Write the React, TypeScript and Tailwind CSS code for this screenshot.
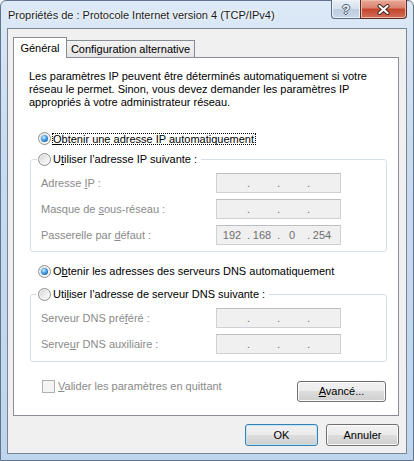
import React from 'react';

function Radio({ checked }: { checked?: boolean }) {
  return (
    <span className="flex h-[13px] w-[13px] shrink-0 items-center justify-center rounded-full border border-[#8e8f8f] bg-[linear-gradient(135deg,#cfd0d1_0%,#eeeeee_55%,#ffffff_100%)] shadow-[inset_0_0_0_1px_#f4f4f4]">
      {checked && (
        <span className="h-[7px] w-[7px] rounded-full bg-[radial-gradient(circle_at_40%_35%,#d6f1ff_0%,#4aa5ec_40%,#0c3d86_100%)]" />
      )}
    </span>
  );
}

function IpField({ values }: { values?: string[] }) {
  const v = values ?? ['', '', '', ''];
  return (
    <div className="flex h-[20px] w-[125px] items-center border border-[#cfd0d3] border-t-[#bdbec2] bg-[#f0f0f0] pl-[3px] text-[#6f6f6f]">
      {v.map((x, i) => (
        <React.Fragment key={i}>
          <span className="w-[24px] text-center">{x}</span>
          {i < 3 && <span className="w-[6px] text-right">.</span>}
        </React.Fragment>
      ))}
    </div>
  );
}

function FieldRow({ label, values }: { label: React.ReactNode; values?: string[] }) {
  return (
    <div className="flex h-[20px] items-center">
      <span className="w-[175px] text-[#8a8a8a]">{label}</span>
      <IpField values={values} />
    </div>
  );
}

function Button({ children, className, isDefault }: { children: React.ReactNode; className: string; isDefault?: boolean }) {
  return (
    <div
      className={`flex items-center justify-center rounded-[3px] border bg-[linear-gradient(#f2f2f2_0%,#ebebeb_50%,#dddddd_50%,#cfcfcf_100%)] text-black ${
        isDefault
          ? 'border-[#3c7fb1] shadow-[inset_0_0_0_1px_#bfe5f9]'
          : 'border-[#707070] shadow-[inset_0_0_0_1px_#fbfbfb]'
      } ${className}`}
    >
      {children}
    </div>
  );
}

function Group({ legend, children, className }: { legend: React.ReactNode; children: React.ReactNode; className: string }) {
  return (
    <fieldset className={`ml-[1px] mr-0 rounded-[3px] border border-[#d5dfe5] px-0 ${className}`}>
      <legend className="ml-[6px] pl-[1px] pr-[4px]">
        <span className="flex h-[13px] items-center">
          <Radio />
          <span className="ml-[2px] leading-[13px]">{legend}</span>
        </span>
      </legend>
      <div className="flex flex-col gap-[6px] pl-[10px]">{children}</div>
    </fieldset>
  );
}

export default function App() {
  return (
    <div className="h-[461px] w-[414px] font-['Liberation_Sans'] text-[11px] leading-[13px] text-black">
      <div className="flex h-full flex-col rounded-t-[6px] border border-[#62758c] bg-[linear-gradient(180deg,#dce9f7_0%,#c9dcf0_30%,#bed5ee_100%)] px-[6px] pb-[6px]">
        {/* title bar */}
        <div className="flex h-[27px] items-start">
          <span className="pl-[1px] pt-[8px] text-[#1b1b1b] [text-shadow:0_0_6px_#ffffff,0_0_3px_#ffffff]">
            Propriétés de : Protocole Internet version 4 (TCP/IPv4)
          </span>
          <div className="-mt-px ml-auto flex h-[19px]">
            <div className="flex w-[29px] items-center justify-center rounded-bl-[4px] border border-r-0 border-t-0 border-[#5b6b80] bg-[linear-gradient(#e9f0f8_0%,#d5e1ee_50%,#bccde0_50%,#c9d8e8_100%)] shadow-[inset_0_0_0_1px_#eef3f9]">
              <span className="font-bold text-[13px] leading-[13px] text-[#f4f6f8] [text-shadow:1px_0_#4b5a6c,-1px_0_#4b5a6c,0_1px_#4b5a6c,0_-1px_#4b5a6c]">?</span>
            </div>
            <div className="flex w-[47px] items-center justify-center rounded-br-[4px] border border-t-0 border-[#5a2a24] bg-[linear-gradient(#eaa998_0%,#d8816c_45%,#c4432b_50%,#d2705a_100%)] shadow-[inset_0_0_0_1px_#f0b8a8]">
              <svg width="13" height="11" viewBox="0 0 13 11">
                <path d="M2.5 2 L10.5 9 M10.5 2 L2.5 9" stroke="#3a2320" strokeWidth="4" strokeLinecap="round" />
                <path d="M2.5 2 L10.5 9 M10.5 2 L2.5 9" stroke="#ffffff" strokeWidth="2.2" strokeLinecap="round" />
              </svg>
            </div>
          </div>
        </div>

        {/* client area */}
        <div className="flex flex-1 flex-col border border-[#7a8593] bg-[#f0f0f0]">
          {/* tabs */}
          <div className="flex items-end pl-[5px] pt-[8px]">
            <div className="relative z-10 -mb-px flex h-[21px] w-[54px] items-center justify-center border border-b-0 border-[#898c95] bg-white">
              Général
            </div>
            <div className="-ml-px flex h-[17px] w-[129px] items-center justify-center border border-b-0 border-[#898c95] bg-[linear-gradient(#f3f3f3,#e5e5e5)]">
              Configuration alternative
            </div>
          </div>

          {/* tab page */}
          <div className="ml-[5px] flex h-[359px] w-[386px] flex-col border border-[#898c95] bg-white pl-[15px] pr-[11px]">
            <p className="mt-[12px] leading-[13px]">
              Les paramètres IP peuvent être déterminés automatiquement si votre
              <br />
              réseau le permet. Sinon, vous devez demander les paramètres IP
              <br />
              appropriés à votre administrateur réseau.
            </p>

            <div className="ml-[9px] mt-[23px] flex h-[13px] items-center">
              <Radio checked />
              <span className="ml-[1px] flex h-[12px] items-center border border-dotted border-black pr-[1px] leading-[10px]">
                <span><u>O</u>btenir une adresse IP automatiquement</span>
              </span>
            </div>

            <Group
              className="mt-[8px] pb-[6px] pt-[7px]"
              legend={<>U<u>t</u>iliser l’adresse IP suivante :</>}
            >
              <FieldRow label={<>Adresse <u>I</u>P :</>} />
              <FieldRow label={<>Masque de <u>s</u>ous-réseau :</>} />
              <FieldRow label={<>Passerelle par <u>d</u>éfaut :</>} values={['192', '168', '0', '254']} />
            </Group>

            <div className="ml-[9px] mt-[13px] flex h-[13px] items-center">
              <Radio checked />
              <span className="ml-[2px]">O<u>b</u>tenir les adresses des serveurs DNS automatiquement</span>
            </div>

            <Group
              className="mt-[10px] pb-[7px] pt-[7px]"
              legend={<>Uti<u>l</u>iser l’adresse de serveur DNS suivante :</>}
            >
              <FieldRow label={<>Serveur DNS pré<u>f</u>éré :</>} />
              <FieldRow label={<>Serve<u>u</u>r DNS auxiliaire :</>} />
            </Group>

            <div className="mt-[18px] flex items-start">
              <div className="ml-[13px] flex h-[13px] items-center">
                <span className="h-[13px] w-[13px] border border-[#b1b1b1] bg-[#f4f4f4]" />
                <span className="ml-[3px] text-[#8a8a8a]"><u>V</u>alider les paramètres en quittant</span>
              </div>
              <Button className="ml-auto mr-[1px] mt-[1px] h-[21px] w-[89px]">
                <span><u>A</u>vancé...</span>
              </Button>
            </div>
          </div>

          {/* dialog buttons */}
          <div className="mt-[8px] flex justify-end gap-[8px] pr-[7px]">
            <Button isDefault className="h-[22px] w-[73px]">OK</Button>
            <Button className="h-[22px] w-[73px]">Annuler</Button>
          </div>
        </div>
      </div>
    </div>
  );
}
